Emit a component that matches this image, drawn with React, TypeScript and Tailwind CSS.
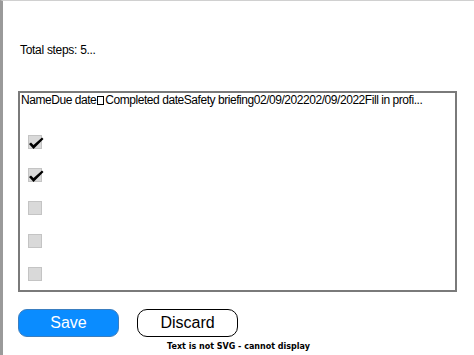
import React from "react";

const Check = ({ checked }: { checked: boolean }) => (
  <div className="relative w-[14px] h-[14px] bg-[#d9d9d9] border border-[#c4c4c4]">
    {checked && (
      <svg viewBox="0 0 16 16" className="absolute left-[-1px] top-[-1px] w-[16px] h-[16px]">
        <path d="M1 9 L3 7.5 L5.5 10 L14 2.5 L15.5 4 L5.5 14 Z" fill="#000" />
      </svg>
    )}
  </div>
);

export default function App() {
  return (
    <div
      className="w-[474px] h-[355px] bg-white relative overflow-hidden border-l-[3px] border-l-[#9a9a9a] border-t border-t-[#d0d0d0]"
      style={{ fontFamily: '"Liberation Sans", Arial, sans-serif' }}
    >
      <div className="pl-[17px] pt-[42px] text-[12px] text-black leading-[14px] tracking-[-0.3px]">Total steps: 5...</div>
      <div className="ml-[15px] mt-[34px] w-[439px] h-[201px] border-2 border-[#7a7a7a] pl-[1px]">
        <div className="text-[12px] leading-[14px] text-black whitespace-nowrap overflow-hidden tracking-[-0.45px]">
          NameDue date<span className="inline-block w-[7px] h-[9px] border border-black align-[-1px] mx-[1px]" />Completed dateSafety briefing02/09/202202/09/2022Fill in profi...
        </div>
        <div className="flex flex-col gap-[19px] pl-[7px] pt-[28px]">
          <Check checked />
          <Check checked />
          <Check checked={false} />
          <Check checked={false} />
          <Check checked={false} />
        </div>
      </div>
      <div className="flex gap-[18px] ml-[15px] mt-[17px]">
        <div className="w-[101px] h-[28px] rounded-[9px] bg-[#0a8cff] border border-[#3a7ec0] text-white text-[16px] flex items-center justify-center">Save</div>
        <div className="w-[101px] h-[28px] rounded-[10px] bg-white border-[1.5px] border-black text-black text-[16px] flex items-center justify-center">Discard</div>
      </div>
      <div className="text-center text-[8px] font-bold text-black mt-[4px]" style={{ fontFamily: '"DejaVu Sans", sans-serif' }}>
        Text is not SVG - cannot display
      </div>
    </div>
  );
}
